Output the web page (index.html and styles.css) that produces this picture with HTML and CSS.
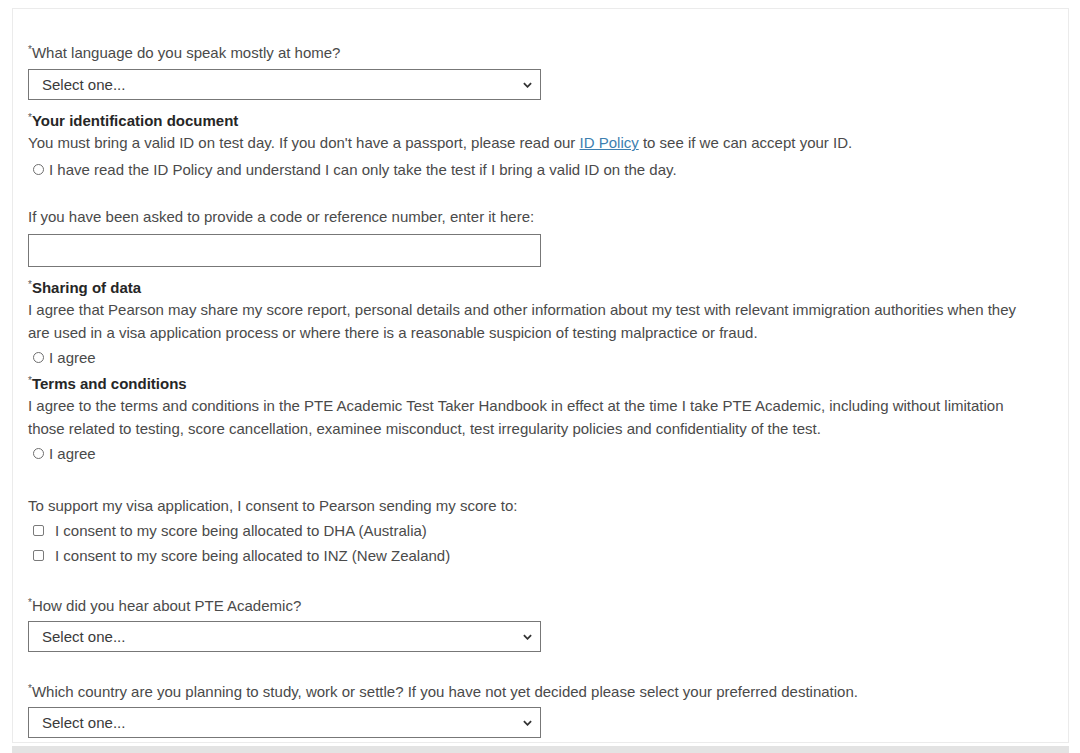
FILE: index.html
```html
<!doctype html>
<html lang="en-US">

  <head>
    <meta charset="utf-8">
    <meta name="viewport" content="width=device-width, initial-scale=1">
    <title>PTE Academic booking</title>
    <link rel="stylesheet" href="styles.css">
  </head>

  <body>
    <form class="card">
      <div class="field">
        <label class="question" for="language"><span class="req">*</span>What language do you speak mostly at home?</label>
        <div class="select-wrap">
          <select id="language">
            <option>Select one...</option>
          </select>
          <svg class="chevron" viewBox="0 0 10 6" width="9" height="6"><path d="M1 1l4 4 4-4" fill="none" stroke="#333" stroke-width="2"/></svg>
        </div>
      </div>

      <div class="field group">
        <div class="heading"><span class="req">*</span>Your identification document</div>
        <p>You must bring a valid ID on test day. If you don't have a passport, please read our <a href="#">ID Policy</a> to see if we can accept your ID.</p>
        <label class="choice"><span class="radio"></span>I have read the ID Policy and understand I can only take the test if I bring a valid ID on the day.</label>
      </div>

      <div class="field spaced">
        <label class="question" for="code">If you have been asked to provide a code or reference number, enter it here:</label>
        <input id="code" type="text" class="text-input">
      </div>

      <div class="field group">
        <div class="heading"><span class="req">*</span>Sharing of data</div>
        <p>I agree that Pearson may share my score report, personal details and other information about my test with relevant immigration authorities when they are used in a visa application process or where there is a reasonable suspicion of testing malpractice or fraud.</p>
        <label class="choice agree"><span class="radio"></span>I agree</label>
      </div>

      <div class="field tight">
        <div class="heading"><span class="req">*</span>Terms and conditions</div>
        <p>I agree to the terms and conditions in the PTE Academic Test Taker Handbook in effect at the time I take PTE Academic, including without limitation those related to testing, score cancellation, examinee misconduct, test irregularity policies and confidentiality of the test.</p>
        <label class="choice agree"><span class="radio"></span>I agree</label>
      </div>

      <div class="field consent">
        <p>To support my visa application, I consent to Pearson sending my score to:</p>
        <label class="choice check first"><span class="box"></span>I consent to my score being allocated to DHA (Australia)</label>
        <label class="choice check"><span class="box"></span>I consent to my score being allocated to INZ (New Zealand)</label>
      </div>

      <div class="field wide">
        <label class="question" for="heard"><span class="req">*</span>How did you hear about PTE Academic?</label>
        <div class="select-wrap">
          <select id="heard">
            <option>Select one...</option>
          </select>
          <svg class="chevron" viewBox="0 0 10 6" width="9" height="6"><path d="M1 1l4 4 4-4" fill="none" stroke="#333" stroke-width="2"/></svg>
        </div>
      </div>

      <div class="field wide">
        <label class="question" for="country"><span class="req">*</span>Which country are you planning to study, work or settle? If you have not yet decided please select your preferred destination.</label>
        <div class="select-wrap">
          <select id="country">
            <option>Select one...</option>
          </select>
          <svg class="chevron" viewBox="0 0 10 6" width="9" height="6"><path d="M1 1l4 4 4-4" fill="none" stroke="#333" stroke-width="2"/></svg>
        </div>
      </div>
    </form>
    <div class="footer-band"></div>
  </body>

</html>
```

FILE: styles.css
```css
html,
body {
  margin: 0;
  padding: 0;
  background: #fff;
}

body {
  font-family: "Liberation Sans", Arial, sans-serif;
  font-size: 15px;
  line-height: 21px;
  color: #4a4a4a;
}

.card {
  margin: 8px 11px 0 12px;
  border: 1px solid #ebebeb;
  padding: 33px 15px 4px 15px;
}

p {
  margin: 0;
  max-width: 1000px;
  line-height: 23px;
}

.field {
  display: flex;
  flex-direction: column;
  align-items: flex-start;
}

.group {
  margin-top: 10px;
}

.spaced {
  margin-top: 26px;
}

.consent {
  margin-top: 30px;
}

.tight {
  margin-top: 5px;
}

.wide {
  margin-top: 29px;
}

.req {
  font-size: 10px;
  vertical-align: top;
  line-height: 16px;
  color: #555;
}

.heading {
  font-weight: bold;
  color: #262626;
}

.heading .req {
  font-weight: normal;
}

a {
  color: #3d7fb0;
  text-decoration: underline;
}

.choice {
  display: flex;
  align-items: center;
  margin-top: 5px;
  padding-left: 5px;
}

.agree {
  margin-top: 3px;
}

.radio {
  width: 11px;
  height: 11px;
  border: 1px solid #6e6e6e;
  border-radius: 50%;
  box-sizing: border-box;
  margin-right: 5px;
}

.check {
  margin-top: 4px;
}

.check.first {
  margin-top: 3px;
}

.box {
  width: 11px;
  height: 11px;
  border: 1px solid #7a7a7a;
  border-radius: 2px;
  box-sizing: border-box;
  margin-right: 11px;
}

.select-wrap {
  position: relative;
  width: 513px;
  margin-top: 5px;
}

.field:first-child .select-wrap {
  margin-top: 6px;
}

select {
  appearance: none;
  display: block;
  width: 100%;
  height: 31px;
  box-sizing: border-box;
  border: 1px solid #777;
  border-radius: 0;
  background: #fff;
  padding: 0 13px;
  font: inherit;
  color: #3a3a3a;
}

.chevron {
  position: absolute;
  right: 9px;
  top: 13px;
}

.text-input {
  width: 513px;
  height: 33px;
  box-sizing: border-box;
  margin-top: 7px;
  border: 1px solid #777;
  border-radius: 0;
  font: inherit;
}

.footer-band {
  margin: 3px 11px 0 12px;
  height: 10px;
  background: #e3e3e3;
}
```
